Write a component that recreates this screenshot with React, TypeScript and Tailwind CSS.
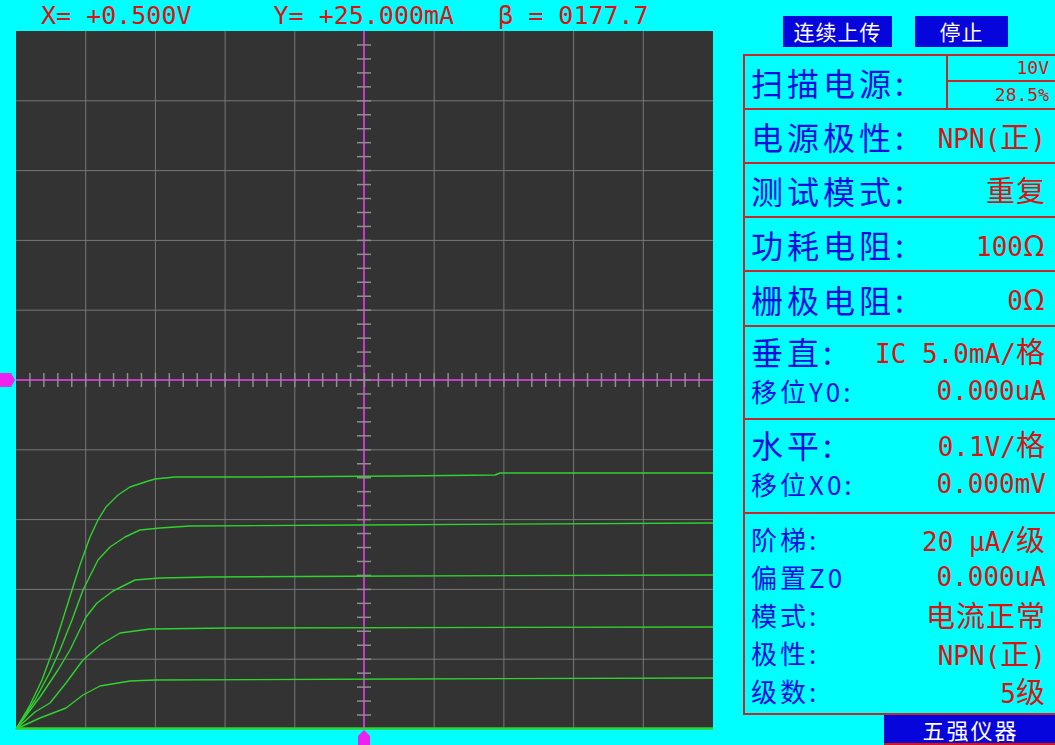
import React from "react";

const PLOT_X = 16;
const PLOT_Y = 31;
const PLOT_W = 697;
const PLOT_H = 698;

type Pt = [number, number];

const curves: Pt[][] = [
    [[16, 729], [30, 705], [42, 680], [53, 650], [62, 622], [72, 590], [80, 565], [90, 537], [98, 520], [106, 507], [118, 495], [130, 487], [145, 482], [155, 479], [175, 477], [260, 477], [400, 476], [495, 475], [500, 473], [713, 473]],
    [[16, 729], [35, 700], [50, 672], [60, 650], [72, 620], [83, 590], [98, 560], [110, 547], [125, 537], [140, 530], [160, 528], [190, 526], [360, 525], [713, 523]],
    [[16, 729], [40, 697], [58, 670], [70, 650], [86, 617], [97, 603], [113, 591], [135, 580], [160, 578], [210, 577], [400, 576], [713, 575]],
    [[16, 729], [35, 712], [50, 703], [66, 683], [83, 660], [100, 645], [120, 633], [150, 629], [230, 628], [713, 627]],
    [[16, 729], [40, 718], [66, 708], [83, 695], [100, 686], [130, 681], [155, 680], [400, 679], [713, 678]],
];

function Scope() {
    const cx = 364;
    const cy = 380;
    const stepX = PLOT_W / 10;
    const stepY = PLOT_H / 10;
    const grid = Array.from({ length: 9 }, (_, i) => i + 1);
    const ticks = Array.from({ length: 49 }, (_, i) => i + 1);

    return (
        <svg width={713} height={714} viewBox="0 31 713 714" className="block">
            <rect x={PLOT_X} y={PLOT_Y} width={PLOT_W} height={PLOT_H} fill="#333333" />
            {grid.map((i) => (
                <line key={"v" + i} x1={PLOT_X + i * stepX} y1={PLOT_Y} x2={PLOT_X + i * stepX} y2={PLOT_Y + PLOT_H} stroke="#777777" strokeWidth={1} />
            ))}
            {grid.map((i) => (
                <line key={"h" + i} x1={PLOT_X} y1={PLOT_Y + i * stepY} x2={PLOT_X + PLOT_W} y2={PLOT_Y + i * stepY} stroke="#777777" strokeWidth={1} />
            ))}

            {/* axes */}
            <line x1={PLOT_X} y1={cy} x2={PLOT_X + PLOT_W} y2={cy} stroke="#c23cc8" strokeWidth={2} />
            <line x1={cx} y1={PLOT_Y} x2={cx} y2={PLOT_Y + PLOT_H} stroke="#c23cc8" strokeWidth={2} />
            {ticks.map((k) => (
                <line key={"tx" + k} x1={PLOT_X + (k * PLOT_W) / 50} y1={cy - 7} x2={PLOT_X + (k * PLOT_W) / 50} y2={cy + 7} stroke="#8f8f8f" strokeWidth={1.5} />
            ))}
            {ticks.map((k) => (
                <line key={"ty" + k} x1={cx - 7} y1={PLOT_Y + (k * PLOT_H) / 50} x2={cx + 7} y2={PLOT_Y + (k * PLOT_H) / 50} stroke="#8f8f8f" strokeWidth={1.5} />
            ))}

            {/* curves */}
            {curves.map((c, i) => (
                <polyline key={i} points={c.map((p) => p.join(",")).join(" ")} fill="none" stroke="#2fd22f" strokeWidth={1.4} strokeLinejoin="round" />
            ))}
            <line x1={PLOT_X} y1={728.5} x2={PLOT_X + PLOT_W} y2={728.5} stroke="#2fd22f" strokeWidth={2.5} />

            {/* markers */}
            <polygon points="0,373 11,373 15,380 11,387 0,387" fill="#ee22ee" />
            <polygon points="358,745 358,736 364,730 370,736 370,745" fill="#ee22ee" />
        </svg>
    );
}

const mono = "font-['DejaVu_Sans_Mono','Noto_Sans_CJK_SC',monospace]";
const cjk = "font-['Noto_Sans_CJK_SC',sans-serif]";

function Val({ t }: { t: string }) {
    const parts = t.split(/([\u4e00-\u9fffΩ]+)/).filter(Boolean);
    return (
        <span className={`${mono} text-[26px] leading-none text-[#dd1111] whitespace-pre`}>
            {parts.map((p, i) =>
                /[\u4e00-\u9fffΩ]/.test(p) ? (
                    <span key={i} className={`${cjk} text-[29px] tracking-[1px]`}>{p}</span>
                ) : (
                    <span key={i}>{p}</span>
                )
            )}
        </span>
    );
}

function BigLabel({ t }: { t: string }) {
    return <span className={`${cjk} text-[32px] leading-none tracking-[4px] text-[#0c0ce0]`}>{t}</span>;
}

function SmallLabel({ t }: { t: string }) {
    return <span className={`${cjk} text-[26px] leading-none tracking-[3px] text-[#0c0ce0]`}>{t}</span>;
}

function Row({ label, value, h }: { label: string; value: string; h: string }) {
    return (
        <div className={`${h} flex items-center justify-between border-b-2 border-[#c62828] pl-[6px] pr-[11px]`}>
            <BigLabel t={label} />
            <Val t={value} />
        </div>
    );
}

export default function App() {
    return (
        <div className="w-[1055px] h-[745px] overflow-hidden bg-[#00ffff] flex">
            {/* scope */}
            <div className="w-[713px] flex flex-col">
                <div className={`h-[31px] flex items-center pl-[41px] ${mono} text-[25px] leading-none text-[#dd1111] whitespace-pre`}>
                    <span>X= +0.500V</span>
                    <span className="ml-[82px]">Y= +25.000mA</span>
                    <span className="ml-[44px]">β = 0177.7</span>
                </div>
                <Scope />
            </div>

            {/* side panel */}
            <div className="ml-[30px] flex flex-col">
                <div className="h-[54px] pt-[16px] pl-[40px] flex gap-[23px]">
                    <div className={`w-[109px] h-[31px] bg-[#0505dc] text-white ${cjk} text-[21px] tracking-[1px] flex items-center justify-center`}>
                        连续上传
                    </div>
                    <div className={`w-[93px] h-[31px] bg-[#0505dc] text-white ${cjk} text-[21px] tracking-[1px] flex items-center justify-center`}>
                        停止
                    </div>
                </div>

                <div className="w-[314px] border-l-2 border-t-2 border-[#c62828]">
                    <div className="h-[54px] flex border-b-2 border-[#c62828]">
                        <div className="w-[201px] pl-[6px] flex items-center">
                            <BigLabel t="扫描电源:" />
                        </div>
                        <div className={`flex-1 border-l-2 border-[#c62828] flex flex-col ${mono} text-[18px] leading-none text-[#dd1111]`}>
                            <div className="h-[26px] flex items-center justify-end pr-[8px] border-b-2 border-[#c62828]">10V</div>
                            <div className="flex-1 flex items-center justify-end pr-[8px]">28.5%</div>
                        </div>
                    </div>
                    <Row h="h-[54px]" label="电源极性:" value="NPN(正)" />
                    <Row h="h-[54px]" label="测试模式:" value="重复" />
                    <Row h="h-[54px]" label="功耗电阻:" value="100Ω" />
                    <Row h="h-[55px]" label="栅极电阻:" value="0Ω" />

                    <div className="h-[93px] pt-[4px] border-b-2 border-[#c62828] pl-[6px] pr-[11px]">
                        <div className="h-[40px] flex items-center justify-between">
                            <BigLabel t="垂直:" />
                            <Val t="IC 5.0mA/格" />
                        </div>
                        <div className="h-[40px] flex items-center justify-between">
                            <SmallLabel t="移位Y0:" />
                            <Val t="0.000uA" />
                        </div>
                    </div>

                    <div className="h-[94px] pt-[4px] border-b-2 border-[#c62828] pl-[6px] pr-[11px]">
                        <div className="h-[40px] flex items-center justify-between">
                            <BigLabel t="水平:" />
                            <Val t="0.1V/格" />
                        </div>
                        <div className="h-[40px] flex items-center justify-between">
                            <SmallLabel t="移位X0:" />
                            <Val t="0.000mV" />
                        </div>
                    </div>

                    <div className="h-[201px] pt-[6px] border-b-2 border-[#c62828] pl-[6px] pr-[11px]">
                        {[
                            ["阶梯:", "20 μA/级"],
                            ["偏置Z0", "0.000uA"],
                            ["模式:", "电流正常"],
                            ["极性:", "NPN(正)"],
                            ["级数:", "5级"],
                        ].map(([l, v]) => (
                            <div key={l} className="h-[38px] flex items-center justify-between">
                                <SmallLabel t={l} />
                                <Val t={v} />
                            </div>
                        ))}
                    </div>
                </div>

                <div className={`ml-[141px] h-[30px] bg-[#0505dc] border-b-2 border-[#dd1111] text-white ${cjk} text-[22px] tracking-[2px] flex items-center justify-center`}>
                    五强仪器
                </div>
            </div>
        </div>
    );
}
